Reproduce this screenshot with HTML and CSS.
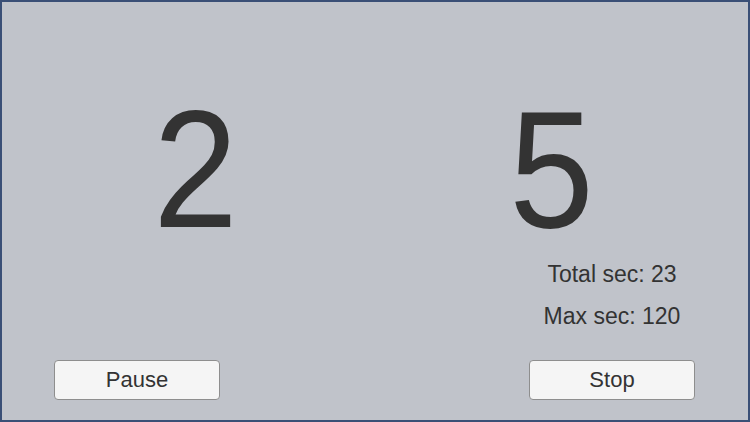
FILE: index.html
```html
<!DOCTYPE html>
<html>
<head>
<meta charset="utf-8">
<link rel="stylesheet" href="styles.css">
</head>
<body>
<div class="frame">
  <div class="digits">
    <div class="digit">2</div>
    <div class="digit">5</div>
  </div>
  <div class="lower">
    <div class="col">
      <button class="btn">Pause</button>
    </div>
    <div class="col">
      <div class="info">Total sec: 23</div>
      <div class="info">Max sec: 120</div>
      <button class="btn stop">Stop</button>
    </div>
  </div>
</div>
</body>
</html>
```
FILE: styles.css
```css
html, body {
  margin: 0;
  padding: 0;
}
body {
  width: 750px;
  height: 422px;
  overflow: hidden;
  font-family: "Liberation Sans", Arial, sans-serif;
  color: #333333;
}
.frame {
  box-sizing: border-box;
  width: 750px;
  height: 422px;
  border: 2px solid #3a4f76;
  background: #c0c3ca;
  display: flex;
  flex-direction: column;
}
.digits {
  display: flex;
  justify-content: center;
  gap: 262.5px;
  padding-top: 84px;
  padding-right: 3.5px;
}
.digit {
  font-size: 167px;
  line-height: 167px;
  height: 167px;
  color: #333333;
  transform: scaleX(0.91);
}
.lower {
  display: flex;
  justify-content: space-between;
  align-items: flex-end;
  padding: 0 53px 0 52px;
}
.col {
  width: 166px;
  display: flex;
  flex-direction: column;
  align-items: center;
}
.info {
  font-size: 23px;
  line-height: 42px;
  white-space: nowrap;
  color: #333333;
}
.btn {
  box-sizing: border-box;
  width: 166px;
  height: 40px;
  margin: 0;
  padding: 0;
  border: 1px solid #8e8e8e;
  border-radius: 4px;
  background: #f5f5f5;
  font-family: "Liberation Sans", Arial, sans-serif;
  font-size: 22px;
  line-height: 38px;
  color: #333333;
}
.stop {
  margin-top: 23px;
}
```
